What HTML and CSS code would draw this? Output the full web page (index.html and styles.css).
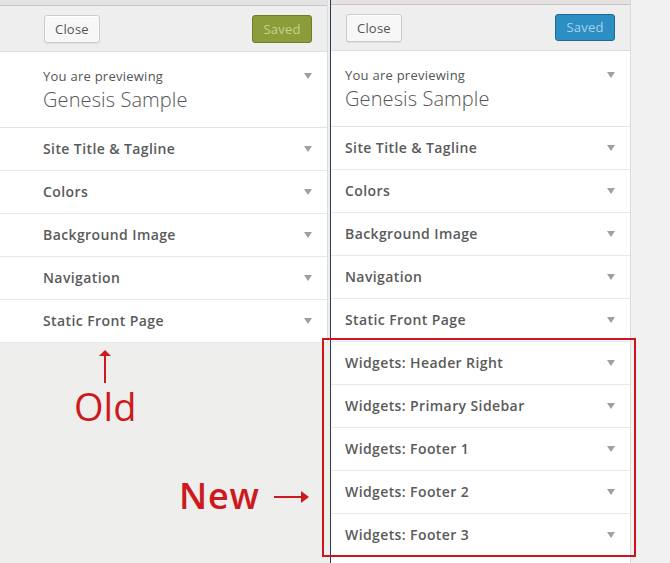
FILE: index.html
```html
<!DOCTYPE html>
<html>
<head>
<meta charset="utf-8">
<link rel="stylesheet" href="styles.css">
</head>
<body>
<div class="stage">
  <div class="col col-old">
    <div class="panel panel-old">
      <div class="strip strip-old"></div>
      <div class="header">
        <button class="btn btn-close">Close</button>
        <button class="btn btn-saved btn-olive">Saved</button>
      </div>
      <div class="preview">
        <span class="tri tri-top"></span>
        <div class="preview-small">You are previewing</div>
        <div class="preview-big">Genesis Sample</div>
      </div>
      <div class="item"><span>Site Title &amp; Tagline</span><span class="tri"></span></div>
      <div class="item"><span>Colors</span><span class="tri"></span></div>
      <div class="item"><span>Background Image</span><span class="tri"></span></div>
      <div class="item"><span>Navigation</span><span class="tri"></span></div>
      <div class="item"><span>Static Front Page</span><span class="tri"></span></div>
    </div>
  </div>
  <div class="col col-new">
    <div class="panel panel-new">
      <div class="strip strip-new"></div>
      <div class="header">
        <button class="btn btn-close">Close</button>
        <button class="btn btn-saved btn-blue">Saved</button>
      </div>
      <div class="preview">
        <span class="tri tri-top"></span>
        <div class="preview-small">You are previewing</div>
        <div class="preview-big">Genesis Sample</div>
      </div>
      <div class="item"><span>Site Title &amp; Tagline</span><span class="tri"></span></div>
      <div class="item"><span>Colors</span><span class="tri"></span></div>
      <div class="item"><span>Background Image</span><span class="tri"></span></div>
      <div class="item"><span>Navigation</span><span class="tri"></span></div>
      <div class="item"><span>Static Front Page</span><span class="tri"></span></div>
      <div class="item"><span>Widgets: Header Right</span><span class="tri"></span></div>
      <div class="item"><span>Widgets: Primary Sidebar</span><span class="tri"></span></div>
      <div class="item"><span>Widgets: Footer 1</span><span class="tri"></span></div>
      <div class="item"><span>Widgets: Footer 2</span><span class="tri"></span></div>
      <div class="item"><span>Widgets: Footer 3</span><span class="tri"></span></div>
    </div>
  </div>
  <div class="col col-rest"></div>

  <div class="note note-old">
    <svg class="arrow-up" width="14" height="34" viewBox="0 0 14 34">
      <path d="M7 34 V4" stroke="#cc1a1f" stroke-width="2" fill="none"/>
      <path d="M1 7 L7 1 L13 7 Z" fill="#cc1a1f"/>
    </svg>
    <div class="label">Old</div>
  </div>
  <div class="note note-new">
    <div class="label label-new">New</div>
    <svg class="arrow-right" width="36" height="14" viewBox="0 0 36 14">
      <path d="M0 7 H30" stroke="#cc1a1f" stroke-width="2" fill="none"/>
      <path d="M27 1 L35 7 L27 13 Z" fill="#cc1a1f"/>
    </svg>
  </div>
  <div class="redbox"></div>
</div>
</body>
</html>
```

FILE: styles.css
```css
* { box-sizing: border-box; }
html, body { margin: 0; padding: 0; }
body {
  font-family: "Open Sans", "Noto Sans", sans-serif;
  background: #f1f1f1;
  color: #555;
}
.stage {
  position: relative;
  display: flex;
  width: 670px;
  height: 563px;
  overflow: hidden;
}
.col { height: 563px; }
.col-old {
  width: 331px;
  background: #eeeeec;
  border-right: 1px solid #2a3d50;
  padding-right: 2px;
}
.col-new {
  width: 300px;
  background: #fff;
  border-right: 1px solid #dcdcdc;
}
.col-rest { flex: 1; background: #f1f1f1; }

.panel { background: #fff; }
.panel-old { border-right: 1px solid #dcdcdc; }

.strip { border-bottom: 1px solid #c6c6c6; }
.strip-old { height: 6px; background: #e3e3e3; }
.strip-new { height: 5px; background: #e7e0e1; }

.header {
  height: 46px;
  background: #eeeeee;
  border-bottom: 1px solid #dddddd;
  display: flex;
  justify-content: space-between;
  align-items: flex-start;
  padding-top: 9px;
}
.panel-old .header { padding-left: 44px; padding-right: 15px; }
.panel-new .header { padding-left: 15px; padding-right: 15px; }

.btn {
  font-family: "Open Sans", "Noto Sans", sans-serif;
  font-size: 13px;
  height: 28px;
  line-height: 26px;
  padding: 0 10px;
  border-radius: 3px;
  border: 1px solid #cccccc;
  margin: 0;
  letter-spacing: 0.2px;
}
.btn-close {
  background: #f7f7f7;
  color: #555;
  box-shadow: inset 0 1px 0 #fff, 0 1px 0 rgba(0,0,0,0.06);
}
.btn-saved { width: 60px; padding: 0; text-align: center; }
.btn-olive {
  background: #8b9c3a;
  border-color: #6e7d27;
  color: #c7d18f;
}
.btn-blue {
  background: #2d8ec3;
  border-color: #1f6b95;
  color: #a3d2ec;
  height: 27px;
  line-height: 25px;
}

.preview {
  position: relative;
  height: 76px;
  border-bottom: 1px solid #e4e4e4;
  padding-top: 15px;
}
.panel-old .preview, .panel-old .item { padding-left: 43px; }
.panel-new .preview, .panel-new .item { padding-left: 14px; }
.preview-small { font-size: 13px; line-height: 18px; color: #555; letter-spacing: 0.25px; }
.preview-big {
  font-size: 20px;
  font-weight: 300;
  line-height: 26px;
  margin-top: 2px;
  color: #555;
  letter-spacing: 0.1px;
}

.item {
  height: 43px;
  border-bottom: 1px solid #e8e8e8;
  display: flex;
  align-items: center;
  justify-content: space-between;
  font-size: 14px;
  font-weight: 600;
  letter-spacing: 0.4px;
  color: #5a5a5a;
  padding-bottom: 2px;
}
.item .tri { margin-top: 2px; }
.panel-old .item { padding-right: 15px; }
.panel-new .item { padding-right: 15px; }

.tri {
  width: 0; height: 0;
  border-left: 4px solid transparent;
  border-right: 4px solid transparent;
  border-top: 6px solid #a0a0a0;
}
.tri-top { position: absolute; top: 21px; right: 15px; }

.note { position: absolute; color: #cc1a1f; }
.label {
  font-size: 38px;
  line-height: 40px;
  font-weight: 500;
}
.note-old {
  left: 74px; top: 349px;
  display: flex; flex-direction: column; align-items: center;
}
.arrow-up { display: block; margin-bottom: 4px; }
.note-old .label { margin-top: -1px; }
.note-new {
  left: 179px; top: 476px;
  display: flex; align-items: center; gap: 14px;
}
.label-new { letter-spacing: 0.8px; font-weight: 600; font-size: 36px; }
.arrow-right { margin-top: 2px; }
.redbox {
  position: absolute;
  left: 322px; top: 338px;
  width: 314px; height: 219px;
  border: 2px solid #d0141c;
}
```
